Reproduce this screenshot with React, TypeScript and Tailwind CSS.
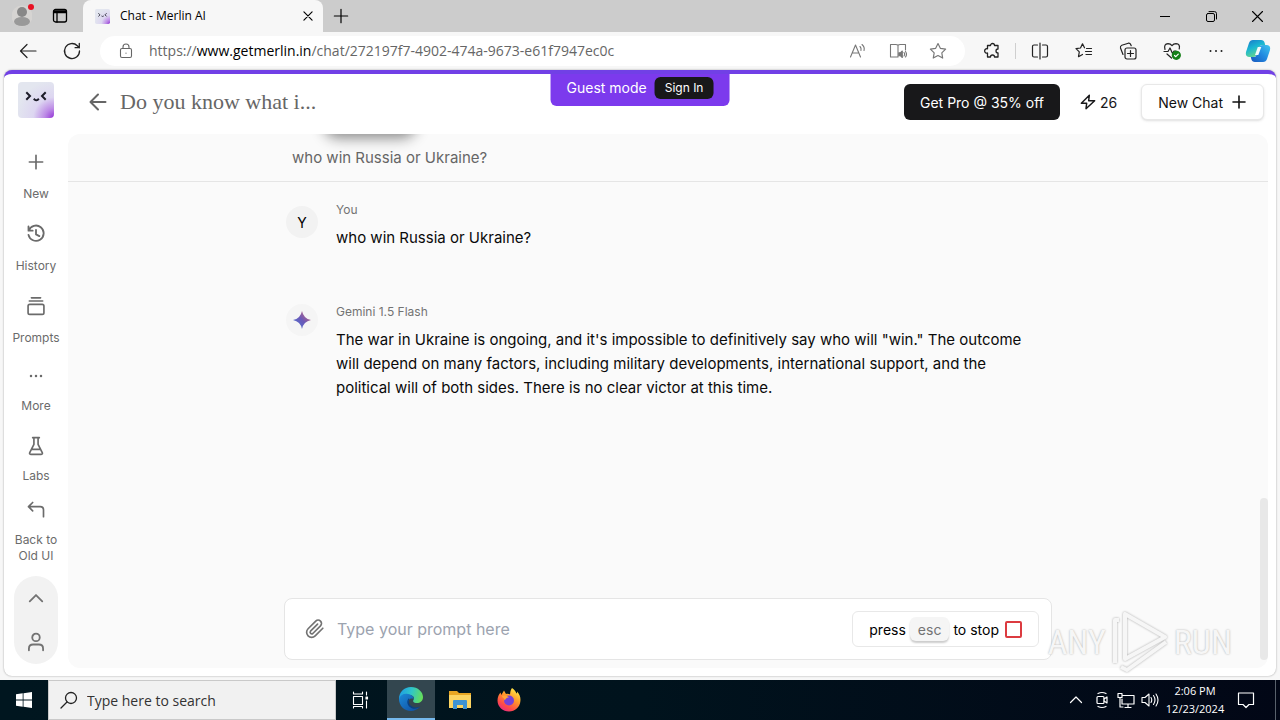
import React, { ReactNode } from "react";

type IconProps = { className?: string; w?: number; children: ReactNode; size?: number; box?: number };

function Icon({ className = "", w = 1.5, children, size = 20, box = 24 }: IconProps) {
  return (
    <svg
      width={size}
      height={size}
      viewBox={`0 0 ${box} ${box}`}
      fill="none"
      stroke="currentColor"
      strokeWidth={w}
      strokeLinecap="round"
      strokeLinejoin="round"
      className={`shrink-0 ${className}`}
      aria-hidden="true"
    >
      {children}
    </svg>
  );
}

function MerlinLogo({ size, id }: { size: number; id: string }) {
  return (
    <svg width={size} height={size} viewBox="0 0 36 36" className="shrink-0" aria-hidden="true">
      <defs>
        <radialGradient id={id} cx="1" cy="1" r="1.05">
          <stop offset="0" stopColor="#9333d6" />
          <stop offset="0.25" stopColor="#bd8be6" />
          <stop offset="0.55" stopColor="#ddd6f1" />
          <stop offset="1" stopColor="#e3e6ef" />
        </radialGradient>
      </defs>
      <rect width="36" height="36" rx="4" fill={`url(#${id})`} />
      <g fill="none" stroke="#1c1c28" strokeWidth="2" strokeLinecap="square">
        <path d="M9 11l3 3-3 3" />
        <path d="M27 11l-3 3 3 3" />
        <path d="M16.5 17.5q1.8 1.6 3.6 0" />
      </g>
    </svg>
  );
}

function TitleBar() {
  return (
    <header className="flex h-8 items-stretch bg-[#cccccc] text-black">
      <div className="flex w-[83px] items-center pl-3">
        <button aria-label="Profile" className="relative mr-5 flex size-5 items-center justify-center">
          <svg width="20" height="22" viewBox="0 0 20 22" aria-hidden="true">
            <circle cx="10" cy="11" r="10.500" fill="#d6d4d2" />
            <circle cx="10" cy="7" r="5" fill="#888" />
            <ellipse cx="10" cy="16.5" rx="8" ry="4.5" fill="#999" />
          </svg>
          <span className="absolute -top-0.5 -right-0.5 size-1.5 rounded-full bg-[#e81123]" />
        </button>
        <button aria-label="Tab actions">
          <Icon size={16} box={16} w={1.3}>
            <rect x="1.5" y="1.5" width="13" height="12.5" rx="2" />
            <path d="M2 3h12M2 4.5h12M5 4v10" />
          </Icon>
        </button>
      </div>
      <div className="flex w-[240px] items-center rounded-t-lg bg-[#f7f7f7] pr-2 pl-3">
        <MerlinLogo size={15} id="tabLogo" />
        <span className="ml-2.5 flex-1 text-[12px]">Chat - Merlin AI</span>
        <button aria-label="Close tab">
          <Icon size={14} w={2}><path d="M5 5l14 14M19 5L5 19" /></Icon>
        </button>
      </div>
      <button aria-label="New tab" className="flex w-9 items-center justify-center">
        <Icon size={16} w={1.8}><path d="M12 2v20M2 12h20" /></Icon>
      </button>
      <div className="ml-auto flex">
        <button aria-label="Minimize" className="flex w-[46px] items-center justify-center">
          <Icon size={10} box={10} w={1}><path d="M0 5.5h10" /></Icon>
        </button>
        <button aria-label="Restore" className="flex w-[46px] items-center justify-center">
          <Icon size={11} box={11} w={1}>
            <rect x="0.5" y="2.5" width="8" height="8" rx="1.5" />
            <path d="M3 .6h5.5a2 2 0 0 1 2 2V8" />
          </Icon>
        </button>
        <button aria-label="Close" className="flex w-[46px] items-center justify-center">
          <Icon size={11} box={11} w={1.1}><path d="M.5.5l10 10M10.5.5l-10 10" /></Icon>
        </button>
      </div>
    </header>
  );
}

const STAR = "M8.5 1.5l2.2 4.5 5 .7-3.6 3.5.8 5-4.4-2.4-4.5 2.4.9-5L1.3 6.7l5-.7z";

function Toolbar() {
  return (
    <div className="flex h-[38px] items-center bg-[#f7f7f7] pr-[9px] pl-[18px]">
      <button aria-label="Back" className="mr-6 text-[#222]">
        <Icon size={20} box={20} w={1.2}><path d="M2.5 10H18M9 3.5L2.5 10 9 16.500" /></Icon>
      </button>
      <button aria-label="Refresh" className="mr-[18px] text-[#222]">
        <Icon size={20} box={20} w={1.3}><path d="M17.500 10a7.500 7.500 0 1 1-2.200-5.300l2 2M17.300 2.500v4.200h-4.200" /></Icon>
      </button>
      <div className="flex h-[30px] min-w-0 flex-1 items-center rounded-full bg-white pr-[18px] pl-[18px] text-[#666]">
        <Icon size={16} box={16} w={1.1}>
          <rect x="2.500" y="5.500" width="11" height="9" rx="1.500" />
          <path d="M5 5.500V4a3 3 0 0 1 6 0v1.500M8 10v.300" />
        </Icon>
        <div role="textbox" aria-label="Address" className="ml-[15px] min-w-0 flex-1 truncate text-[14px] leading-5">
          https://<span className="text-black">www.getmerlin.in</span>/chat/272197f7-4902-474a-9673-e61f7947ec0c
        </div>
        <div className="flex items-center gap-[22px] text-[#777]">
          <button aria-label="Read aloud">
            <Icon size={18} box={18} w={1.1}>
              <path d="M1.500 15L6.500 3l5 12M3.200 11h6.600M11 4.500q1.500 1.500 1 4M13 2.500q3 2.500 2 6" />
            </Icon>
          </button>
          <button aria-label="Immersive reader">
            <Icon size={18} box={18} w={1.1}>
              <path d="M9 3v12M8.500 15H1.500V2.500H7q2 0 2 1 0-1 2-1h5.500V8" />
              <path d="M9.800 10.800h1.500l2-1.800v6.500l-2-1.800H9.800z" fill="currentColor" />
              <path d="M15 10.500q1.300 1.800 0 3.500M16.500 9.500q2 2.700 0 5.500" />
            </Icon>
          </button>
          <button aria-label="Favorite">
            <Icon size={18} box={17} w={1.1}><path d={STAR} /></Icon>
          </button>
        </div>
      </div>
      <div className="flex items-center text-[#222]">
        <button aria-label="Extensions" className="ml-[18px]">
          <Icon size={18} box={18} w={1.3}>
            <path d="M4.500 3.500h3a2 2 0 1 1 4 0H15v3.500a2 2 0 1 0 0 4v4h-3.500a2 2 0 0 0-4 0h-3V11a2.200 2.200 0 1 1 0-4.200z" />
          </Icon>
        </button>
        <span className="ml-[14px] h-4 w-px bg-[#cfcfcf]" />
        <button aria-label="Split screen" className="ml-[15px]">
          <Icon size={18} box={18} w={1.2}>
            <path d="M6.500 3H3a1.500 1.500 0 0 0-1.500 1.500v9A1.500 1.500 0 0 0 3 15h3.500M11.500 3H15a1.500 1.500 0 0 1 1.500 1.500v9A1.500 1.500 0 0 1 15 15h-3.500M9 1v16" />
          </Icon>
        </button>
        <button aria-label="Favorites" className="ml-[26px]">
          <Icon size={18} box={18} w={1.2}>
            <path d="M9.500 5.800L7.500 1.800 5.500 6 1 6.600l3.300 3.300-.8 4.800 4-2.200M11.500 6.500h5M10.500 9.500h6M11 12.500h5.500" />
          </Icon>
        </button>
        <button aria-label="Collections" className="ml-[26px]">
          <Icon size={18} box={18} w={1.2}>
            <rect x="6" y="6" width="11" height="11" rx="2" />
            <path d="M11.500 8.500v6M8.500 11.500h6M4 12.500L1.500 6Q1 4 2.800 3.200l6.500-2q1.800-.3 2.500 1.500l.4 1" />
          </Icon>
        </button>
        <button aria-label="Browser essentials" className="ml-[26px]">
          <Icon size={18} box={18} w={1.2}>
            <path d="M2 7.500Q.5 2 5 1.700q2.500 0 4 2 1.500-2 4-2 4.500.3 3.200 5.300M1 9.500h4l2-3.500 2.500 5.500 1.500-2.500h2M4 12l4.500 4" />
            <circle cx="13.300" cy="13.300" r="4" fill="#16801a" stroke="#16801a" />
            <path d="M11.500 13.500l1.300 1.200 2.500-2.500" stroke="#fff" />
          </Icon>
        </button>
        <button aria-label="Settings and more" className="ml-[26px]">
          <Icon size={18} box={18} w={2}><path d="M3.500 9h.01M9 9h.01M14.500 9h.01" /></Icon>
        </button>
        <button aria-label="Copilot" className="ml-5">
          <svg width="26" height="24" viewBox="0 0 26 24" aria-hidden="true">
            <defs>
              <linearGradient id="cpA" x1="0" y1="0" x2="0.5" y2="1">
                <stop offset="0" stopColor="#1b75c9" /><stop offset="0.5" stopColor="#19b6d2" /><stop offset="1" stopColor="#6bd88a" />
              </linearGradient>
              <linearGradient id="cpB" x1="1" y1="0" x2="0" y2="1">
                <stop offset="0" stopColor="#3fc7ee" /><stop offset="0.5" stopColor="#2289e0" /><stop offset="1" stopColor="#1857bd" />
              </linearGradient>
            </defs>
            <path d="M8 1h8q3 0 3.700 3l.5 2h-3q-2.200 0-3 2.500L12 15q-1 3-4 3H4q-4-.5-3-5L4 4Q5 1 8 1z" fill="url(#cpA)" />
            <path d="M18 23h-8q-3 0-3.700-3l-.5-2h3q2.200 0 3-2.500L14 9q1-3 4-3h4q4 .5 3 5l-3 9q-1 3-4 3z" fill="url(#cpB)" />
            <path d="M12.800 8h3.500l-3 8H10z" fill="#f4fafc" />
          </svg>
        </button>
      </div>
    </div>
  );
}

function NavItem({ label, children, className }: { label: string; children: ReactNode; className: string }) {
  return (
    <a href="#" className={`flex w-full flex-col items-center text-center text-[12px] leading-4 text-[#6b6b6b] ${className}`}>
      {children}
      <span className="w-[52px]">{label}</span>
    </a>
  );
}

function Sidebar() {
  return (
    <nav className="flex w-16 shrink-0 flex-col items-center pt-2 pb-3 text-[#737373]">
      <a href="#" aria-label="Merlin home"><MerlinLogo size={36} id="sideLogo" /></a>
      <NavItem label="New" className="mt-[34px] gap-[14px]">
        <Icon size={20} w={2}><path d="M12 4v16M4 12h16" /></Icon>
      </NavItem>
      <NavItem label="History" className="mt-[22px] gap-[14px]">
        <Icon size={20} w={2.200}><path d="M3 3v5h5M3.300 8A9.200 9.200 0 1 1 3 13M12 7v5.500l4 2" /></Icon>
      </NavItem>
      <NavItem label="Prompts" className="mt-[22px] gap-[14px]">
        <Icon size={20} w={2}><rect x="2.500" y="10" width="19" height="12" rx="2" /><path d="M4 6h16M6.500 2.200h11" /></Icon>
      </NavItem>
      <NavItem label="More" className="mt-5 gap-3">
        <Icon size={20} w={3}><path d="M6 12h.01M12 12h.01M18 12h.01" /></Icon>
      </NavItem>
      <NavItem label="Labs" className="mt-[22px] gap-3">
        <Icon size={20} w={2}><path d="M8 2h8M9.500 2v8L4.500 20q-.8 2 1.200 2h12.600q2 0 1.200-2l-5-10V2M7 16h10" /></Icon>
      </NavItem>
      <NavItem label="Back to Old UI" className="mt-4 gap-3">
        <Icon size={20} w={2}><path d="M8 3L3 8l5 5M3 8h14q4 0 4 4v8" /></Icon>
      </NavItem>
      <div className="mt-3 flex h-[88px] w-11 flex-col items-center justify-between rounded-full bg-[#f2f2f2] px-2 py-3">
        <button aria-label="Expand"><Icon size={20} w={2.200}><path d="M4.500 16L12 8.500l7.500 7.500" /></Icon></button>
        <button aria-label="Account"><Icon size={20} w={2.200}><circle cx="12" cy="6.500" r="4.500" /><path d="M3.500 22v-2q0-5 5-5h7q5 0 5 5v2" /></Icon></button>
      </div>
    </nav>
  );
}

function ChatHeader() {
  return (
    <div className="flex h-[60px] shrink-0 items-center pr-1 pb-1 pl-5">
      <button aria-label="Go back" className="text-[#666]">
        <Icon size={20} w={2.400}><path d="M3 12h18M12 3l-9 9 9 9" /></Icon>
      </button>
      <h1 className="ml-3 font-['Liberation_Serif',serif] text-[22px] leading-7 text-[#666]">Do you know what i...</h1>
      <div className="ml-auto flex items-center">
        <button className="h-9 rounded-md bg-[#18181a] px-4 text-[14px] text-white">Get Pro @ 35% off</button>
        <div className="ml-5 flex items-center gap-1 text-[14px] text-[#18181a]">
          <Icon size={16} w={2.200}><path d="M14 2L2 14h8l-1 8 13-12h-9z" /></Icon>
          26
        </div>
        <button className="ml-6 flex h-9 items-center gap-2 rounded-md border border-[#e8e8e8] bg-white px-4 text-[14px] text-[#111] shadow-sm">
          New Chat
          <Icon size={16} w={2.400}><path d="M12 3v18M3 12h18" /></Icon>
        </button>
      </div>
    </div>
  );
}

function Message({ avatar, avatarClass, name, children }: { avatar: ReactNode; avatarClass: string; name: string; children: ReactNode }) {
  return (
    <article className="flex gap-[18px]">
      <div className={`flex size-8 shrink-0 items-center justify-center rounded-full text-[14px] text-black ${avatarClass}`}>{avatar}</div>
      <div className="min-w-0">
        <div className="text-[12px] leading-4 text-[#737373]">{name}</div>
        <p className="mt-2 text-[15px] leading-6 text-[#0a0a0a]">{children}</p>
      </div>
    </article>
  );
}

function PromptBox() {
  return (
    <div className="mx-auto flex h-[62px] w-full max-w-[768px] items-center rounded-lg border border-[#e5e5e5] bg-white pr-3 pl-5">
      <button aria-label="Attach file" className="text-[#737373]">
        <Icon size={20} w={2}>
          <path d="M21.400 11.100l-9.200 9.100a6 6 0 0 1-8.500-8.500l9.200-9.100a4 4 0 0 1 5.700 5.700l-9.200 9.100a2 2 0 0 1-2.800-2.800l8.500-8.500" />
        </Icon>
      </button>
      <input aria-label="Prompt" placeholder="Type your prompt here" className="ml-3 min-w-0 flex-1 bg-transparent text-[16px] outline-none placeholder:text-[#9ca3af]" />
      <button className="flex h-9 items-center rounded-md border border-[#e8e8e8] px-4 text-[14px] text-black">
        press
        <kbd className="mx-1 flex h-6 items-center rounded-md bg-[#f5f5f5] px-2 font-['Inter',sans-serif] text-[14px] text-[#737373] shadow-[0_2px_2px_#ccc]">esc</kbd>
        to stop
        <span className="ml-1.5 size-[17px] rounded-xs border-2 border-[#dc3b40]" />
      </button>
    </div>
  );
}

function Watermark() {
  return (
    <div
      aria-hidden="true"
      className="pointer-events-none absolute right-[44px] bottom-0.5 flex items-center gap-1.5 font-['Roboto_Condensed','Liberation_Sans_Narrow','Roboto',sans-serif] text-[34px] leading-[64px] text-[#f6f6f6] [text-shadow:0_0_2px_#aaa]"
    >
      ANY
      <svg width="56" height="64" viewBox="0 0 56 64" className="[filter:drop-shadow(0_0_1px_#aaa)]">
        <g fill="none" stroke="#f6f6f6" strokeWidth="4" strokeLinejoin="round">
          <path d="M13 4v45l40-22z" />
          <path d="M7 10H3v43M9 57l6 3 39-28" />
        </g>
      </svg>
      RUN
    </div>
  );
}

function Taskbar() {
  return (
    <footer className="flex h-10 shrink-0 items-stretch bg-linear-to-r from-[#00161f] via-[#00131d] to-[#020716] text-white">
      <button aria-label="Start" className="flex w-12 items-center justify-center">
        <svg width="16" height="16" viewBox="0 0 16 16" fill="#fff" aria-hidden="true"><path d="M0 2.300L6.700 1.300v6.200H0zM7.500 1.200L16 0v7.500H7.500zM0 8.400h6.700v6.300L0 13.700zM7.500 8.400H16V16l-8.500-1.200z" /></svg>
      </button>
      <label className="flex w-[288px] items-center gap-[9px] border border-[#c9c9c9] bg-[#f1f1f1] pl-[11px] text-[#222]">
        <Icon size={18} box={18} w={1.300}><circle cx="11" cy="7" r="5.500" /><path d="M7 11L1 17" /></Icon>
        <input aria-label="Search" placeholder="Type here to search" className="min-w-0 flex-1 bg-transparent text-[14px] outline-none placeholder:text-[#333]" />
      </label>
      <button aria-label="Task view" className="mr-[3px] flex w-12 items-center justify-center">
        <Icon size={18} box={18} w={1.100}><rect x="2.500" y="5.500" width="9" height="8" /><path d="M2.500 1v2h9V1M2.500 17v-1.500h9V17M15.500 1v3M15.500 10v7" /><path d="M15 6h1.500v2H15z" fill="#fff" /></Icon>
      </button>
      <button aria-label="Microsoft Edge" className="flex w-12 items-center justify-center border-b-2 border-[#76b9ed] bg-[#33464f]">
        <svg width="24" height="24" viewBox="0 0 24 24" aria-hidden="true">
          <defs>
            <linearGradient id="edA" x1="0" y1="0.3" x2="1" y2="0.5"><stop offset="0" stopColor="#1d9ce5" /><stop offset="0.5" stopColor="#30c6c8" /><stop offset="1" stopColor="#66df59" /></linearGradient>
            <linearGradient id="edB" x1="0" y1="0" x2="1" y2="1"><stop offset="0" stopColor="#1b8ad8" /><stop offset="1" stopColor="#104a9c" /></linearGradient>
          </defs>
          <path d="M0 12C0 5 5 0 12 0s12 5 12 10c0 4-3 6-6 6-3.500 0-4.500-1.500-3.500-3 1.500-2.500-.5-5-4-5C6 8 2 10 0 14z" fill="url(#edA)" />
          <path d="M0 12c1-4 5-6 9-5 4 .8 6 3 5.700 5-3.700-1.500-6 1-5 4.500 1 4 6 6 11.300 3.300C18.700 22.500 15.500 24 12 24 5 24 0 18.500 0 12z" fill="url(#edB)" />
          <path d="M9.500 11.500c-3 4 0 9.500 5 10.200 3 .3 5-.8 6.700-2.200-4.700 2-9 .5-10.700-2.500-1-2-1-4-.2-5.200z" fill="#0b3f80" />
        </svg>
      </button>
      <button aria-label="File Explorer" className="flex w-[49px] items-center justify-center">
        <svg width="22" height="18" viewBox="0 0 22 18" aria-hidden="true">
          <path d="M0 0h8l2 2h12v15H0z" fill="#e8a623" /><path d="M0 4h22v13H0z" fill="#fcd462" />
          <path d="M4 18V10q0-1 1-1h12q1 0 1 1v8h-4v-4H8v4z" fill="#3e93d3" />
        </svg>
      </button>
      <button aria-label="Firefox" className="flex w-[49px] items-center justify-center">
        <svg width="24" height="24" viewBox="0 0 24 24" aria-hidden="true">
          <defs><linearGradient id="ffA" x1="0.8" y1="0" x2="0.2" y2="1"><stop offset="0" stopColor="#fff04a" /><stop offset="0.4" stopColor="#ff9a2a" /><stop offset="0.75" stopColor="#ff4a48" /><stop offset="1" stopColor="#e5268c" /></linearGradient></defs>
          <path d="M15 0c3 2 4 4 4.300 5.500 1-.5.700-1.500.7-2 3 3 3.700 6 3.400 9.500C23 19 18 23.500 12 23.500S.5 19 .5 12.500C.5 9 2 6 3.500 4.500L4.300 7 7 2.500l2 3.500c2-.5 3 0 4 .5.300-2.500.5-4.500 2-6.500z" fill="url(#ffA)" />
          <circle cx="12" cy="12.500" r="5" fill="#7541d8" />
          <path d="M5 8c2.500-.8 5-.5 7 1.500-3 0-3 1.500-4.500 3C7.500 9.500 5 10 5 8z" fill="#ffa436" />
        </svg>
      </button>
      <div className="ml-auto flex items-center">
        <button aria-label="Show hidden icons" className="mr-2.5"><Icon size={14} box={14} w={1.200}><path d="M1.500 9.500L7 4l5.500 5.500" /></Icon></button>
        <button aria-label="Meet now" className="mr-1.5"><Icon size={18} box={18} w={1.200}><rect x="4" y="5.500" width="7" height="7" rx="1" /><path d="M11 8l3-2v6l-3-2M5 2.500q4-2 8 0M5 15.500q4 2 8 0" /></Icon></button>
        <button aria-label="Network" className="mr-1.5"><Icon size={18} box={18} w={1.200}><path d="M6 4.500h11v8.500H5V8M8 16.500h6M11 13v3.500M1 2.500h4v4H1zM3 6.500v9.500h3" /></Icon></button>
        <button aria-label="Volume" className="mr-1.5"><Icon size={18} box={18} w={1.100}><path d="M1 6.500h3L8 3v12l-4-3.500H1zM10 6.500q1.500 2.500 0 5M12.500 4.500q3 4.500 0 9M15 3q4 6 0 12" /></Icon></button>
        <div className="w-[60px] text-center text-[11px] leading-[18px] whitespace-nowrap"><div>2:06 PM</div><div>12/23/2024</div></div>
        <button aria-label="Notifications" className="mr-4 ml-3"><Icon size={18} box={18} w={1.200}><path d="M1.500 2h15v11.500H12L9 16.500l-3-3H1.500z" /></Icon></button>
        <div className="ml-1 h-10 w-[5px] border-l border-[#59616b]" />
      </div>
    </footer>
  );
}

export default function App() {
  return (
    <div className="flex min-h-screen flex-col bg-[#f7f7f7] font-['Open_Sans',sans-serif]">
      <TitleBar />
      <Toolbar />
      <div className="relative mx-1 mb-1 flex flex-1 overflow-hidden rounded-lg border-t-4 border-[#7140e6] bg-white font-['Inter',sans-serif] shadow-[0_0_2px_#999]">
        <Sidebar />
        <div className="flex min-w-0 flex-1 flex-col pr-2 pb-2">
          <ChatHeader />
          <main className="relative flex flex-1 flex-col overflow-hidden rounded-xl bg-[#fafafa]">
            <div className="h-12 border-b border-[#e5e5e5]">
              <div className="relative mx-auto w-full max-w-[768px] pl-2">
                <span className="absolute -top-6 left-11 h-5 w-[84px] rounded-full shadow-[0_4px_14px_4px_#888]" />
                <p className="relative pt-3 text-[15px] leading-6 text-[#666]">who win Russia or Ukraine?</p>
              </div>
            </div>
            <div className="mx-auto flex w-full max-w-[768px] flex-1 flex-col gap-[54px] pt-5 pr-4 pl-0.5">
              <Message avatar="Y" avatarClass="mt-1 bg-[#f2f2f2]" name="You">who win Russia or Ukraine?</Message>
              <Message
                name="Gemini 1.5 Flash"
                avatarClass="bg-[#f5f5f5]"
                avatar={
                  <svg width="18" height="18" viewBox="0 0 18 18" aria-hidden="true">
                    <defs><linearGradient id="gem" x1="0" y1="1" x2="1" y2="0"><stop offset="0" stopColor="#4778d8" /><stop offset="0.5" stopColor="#6b59b8" /><stop offset="1" stopColor="#dc6a70" /></linearGradient></defs>
                    <path d="M9 0q1.500 7.500 9 9-7.500 1.500-9 9-1.500-7.500-9-9 7.500-1.500 9-9z" fill="url(#gem)" />
                  </svg>
                }
              >
                The war in Ukraine is ongoing, and it's impossible to definitively say who will "win." The outcome will depend on many factors, including military developments, international support, and the political will of both sides. There is no clear victor at this time.
              </Message>
            </div>
            <div className="mb-2"><PromptBox /></div>
            <span className="absolute right-0 bottom-2 h-[162px] w-2 rounded-full bg-[#e8e8e8]" />
          </main>
        </div>
        <div className="absolute -top-px left-1/2 flex h-[33px] -translate-x-1/2 items-center gap-2 rounded-b-md bg-[#7c3aed] px-4 pb-1 text-[14px] whitespace-nowrap text-white">
          Guest mode
          <button className="h-[22px] rounded-md bg-[#18181a] px-2.5 text-[12px]">Sign In</button>
        </div>
        <Watermark />
      </div>
      <Taskbar />
    </div>
  );
}
